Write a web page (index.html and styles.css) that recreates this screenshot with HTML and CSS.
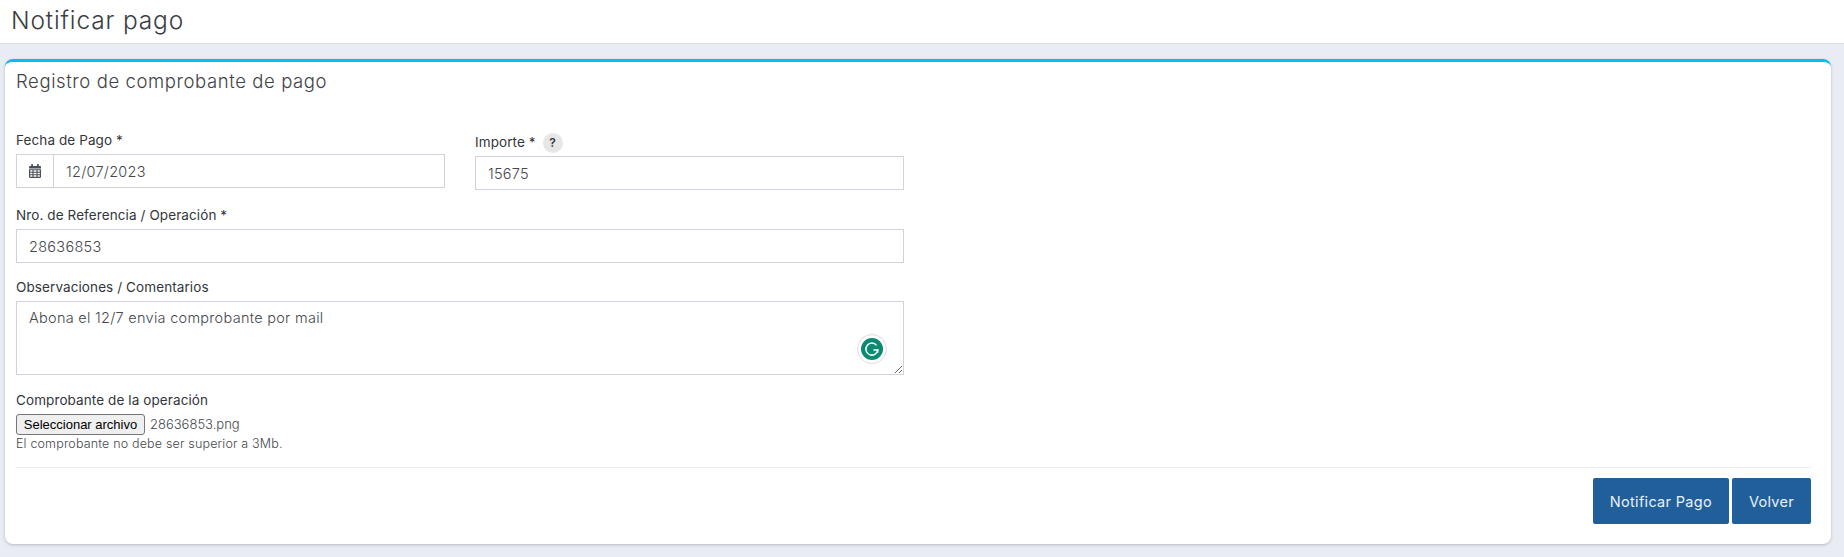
FILE: index.html
```html
<!DOCTYPE html>
<html lang="es">
<head>
    <meta charset="UTF-8">
    <title>Notificar pago</title>
    <link rel="stylesheet" href="styles.css">
</head>
<body>
    <!-- Page title -->
    <div class="page-header">Notificar pago</div>

    <div class="card">
        <div class="card-title">Registro de comprobante de pago</div>

        <form class="form-grid">
            <div class="field">
                <label class="field-label">Fecha de Pago *</label>
                <div class="input-group">
                    <span class="input-addon">
                        <svg width="12" height="14" viewBox="0 0 12 14" fill="#495057">
                            <rect x="2.2" y="0" width="1.8" height="3" rx=".6"/>
                            <rect x="8" y="0" width="1.8" height="3" rx=".6"/>
                            <path d="M0 3.2A1.2 1.2 0 0 1 1.2 2H11a1 1 0 0 1 1 1.2V4.6H0z"/>
                            <path fill-rule="evenodd" d="M0 5.2h12v7.6a1.2 1.2 0 0 1-1.2 1.2H1.2A1.2 1.2 0 0 1 0 12.800zM1.200 6.300v1.500h2.200V6.300zm3.300 0v1.500h3V6.300zm4.100 0v1.500h2.200V6.300zM1.200 8.800v1.500h2.200V8.800zm3.300 0v1.500h3V8.800zm4.100 0v1.500h2.200V8.800zM1.200 11.200v1.600h2.200v-1.600zm3.300 0v1.600h3v-1.600zm4.100 0v1.600h2.200v-1.600z"/>
                        </svg>
                    </span>
                    <input class="text-input" type="text" value="12/07/2023">
                </div>
            </div>

            <div class="field">
                <label class="field-label label-help">Importe * <span class="help-badge">?</span></label>
                <input class="text-input" type="text" value="15675">
            </div>

            <div class="field field-wide field-tight">
                <label class="field-label">Nro. de Referencia / Operación *</label>
                <input class="text-input" type="text" value="28636853">
            </div>

            <div class="field field-wide">
                <label class="field-label">Observaciones / Comentarios</label>
                <div class="textarea-wrap">
                    <textarea class="text-input comments">Abona el 12/7 envia comprobante por mail</textarea>
                    <!-- Grammarly badge -->
                    <span class="grammarly">
                        <svg width="22" height="22" viewBox="0 0 22 22">
                            <circle cx="11" cy="11" r="11" fill="#0b8a73"/>
                            <path d="M15.600 7.400A6 6 0 1 0 16.800 12H12.400" fill="none" stroke="#fff" stroke-width="1.500"/>
                            <path d="M16.700 11.400v3.200" fill="none" stroke="#fff" stroke-width="1.500"/>
                        </svg>
                    </span>
                </div>
            </div>

            <div class="field field-wide file-field">
                <label class="field-label">Comprobante de la operación</label>
                <div class="file-row">
                    <button type="button" class="file-button">Seleccionar archivo</button>
                    <span class="file-name">28636853.png</span>
                </div>
                <small class="file-hint">El comprobante no debe ser superior a 3Mb.</small>
            </div>
        </form>

        <div class="card-footer">
            <button type="button" class="btn">Notificar Pago</button>
            <button type="button" class="btn">Volver</button>
        </div>
    </div>
</body>
</html>
```

FILE: styles.css
```css
/* Basic layout */
body {
    margin: 0;
    height: 557px;
    overflow: hidden;
    background-color: #e9ecf2;
    font-family: Inter, "Open Sans", sans-serif;
    color: #3f4349;
}
.page-header {
    height: 44px;
    box-sizing: border-box;
    padding: 5px 0 0 11px;
    background-color: #fff;
    border-bottom: 1px solid #dcdfe6;
    font-size: 24.500px;
    line-height: 30px;
    font-weight: 300;
    color: #3a3d42;
    letter-spacing: 0.85px;
}
/* Card */
.card {
    margin: 15px 13px 0 5px;
    height: 485px;
    box-sizing: border-box;
    padding: 8px 20px 0 11px;
    background-color: #fff;
    border-top: 3px solid #00bfee;
    border-radius: 8px;
    box-shadow: 0 1px 3px rgba(60, 70, 90, 0.3);
}
.card-title {
    font-size: 18.500px;
    line-height: 22px;
    font-weight: 300;
    color: #3f4247;
    letter-spacing: 0.6px;
    height: 60px;
}
/* Form */
.form-grid {
    display: grid;
    grid-template-columns: 429px 429px;
    column-gap: 30px;
    width: 888px;
}
.field {
    display: flex;
    flex-direction: column;
    margin-bottom: 15px;
}
.field-wide {
    grid-column: 1 / 3;
}
.field-tight {
    margin-bottom: 14px;
}
.field-label {
    height: 20px;
    font-size: 13.500px;
    line-height: 21px;
    font-weight: 400;
    color: #33363a;
    letter-spacing: 0.1px;
    margin-bottom: 4px;
}
.label-help {
    height: 22px;
    line-height: 24px;
}
.help-badge {
    display: inline-block;
    width: 20px;
    height: 20px;
    margin-left: 3px;
    border-radius: 50%;
    background-color: #e6e6e6;
    text-align: center;
    line-height: 20px;
    font-size: 12px;
    font-weight: 600;
}
.text-input {
    display: block;
    width: 100%;
    height: 34px;
    box-sizing: border-box;
    padding: 0 12px;
    border: 1px solid #d0d3df;
    border-radius: 0;
    outline: none;
    font-family: inherit;
    font-size: 14.500px;
    font-weight: 300;
    letter-spacing: 0.28px;
    color: #45484c;
}
.input-group {
    display: flex;
}
.input-addon {
    flex: 0 0 37px;
    display: flex;
    align-items: center;
    justify-content: center;
    height: 34px;
    box-sizing: border-box;
    border: 1px solid #d0d3df;
    border-right: 0;
}
.textarea-wrap {
    position: relative;
}
.comments {
    height: 74px;
    padding-top: 6px;
    line-height: 20px;
    resize: vertical;
}
.grammarly {
    position: absolute;
    right: 17px;
    bottom: 11px;
    width: 22px;
    height: 22px;
    padding: 3px;
    background-color: #fff;
    border: 1px solid #dcdde4;
    border-radius: 50%;
}
/* File picker */
.file-field {
    margin-bottom: 0;
}
.file-row {
    display: flex;
    align-items: center;
    height: 20px;
}
.file-button {
    height: 21px;
    width: 129px;
    padding: 0;
    background-color: #efefef;
    border: 1px solid #767676;
    border-radius: 3px;
    font-family: "Liberation Sans", Arial, sans-serif;
    font-size: 13px;
    color: #000;
}
.file-name {
    margin-left: 5px;
    font-size: 13px;
    font-weight: 300;
    color: #45484c;
}
.file-hint {
    margin-top: 1px;
    font-size: 12.500px;
    line-height: 18px;
    font-weight: 300;
    letter-spacing: 0.17px;
    color: #45484c;
}
/* Footer */
.card-footer {
    display: flex;
    justify-content: flex-end;
    gap: 3px;
    margin-top: 14px;
    padding: 10px 0 0;
    border-top: 1px solid #eeeeee;
}
.btn {
    height: 46px;
    padding: 0 17px;
    background-color: #215f9b;
    border: none;
    border-radius: 2px;
    font-family: inherit;
    font-size: 14.500px;
    letter-spacing: 0.3px;
    color: #e8f1fa;
}
```
